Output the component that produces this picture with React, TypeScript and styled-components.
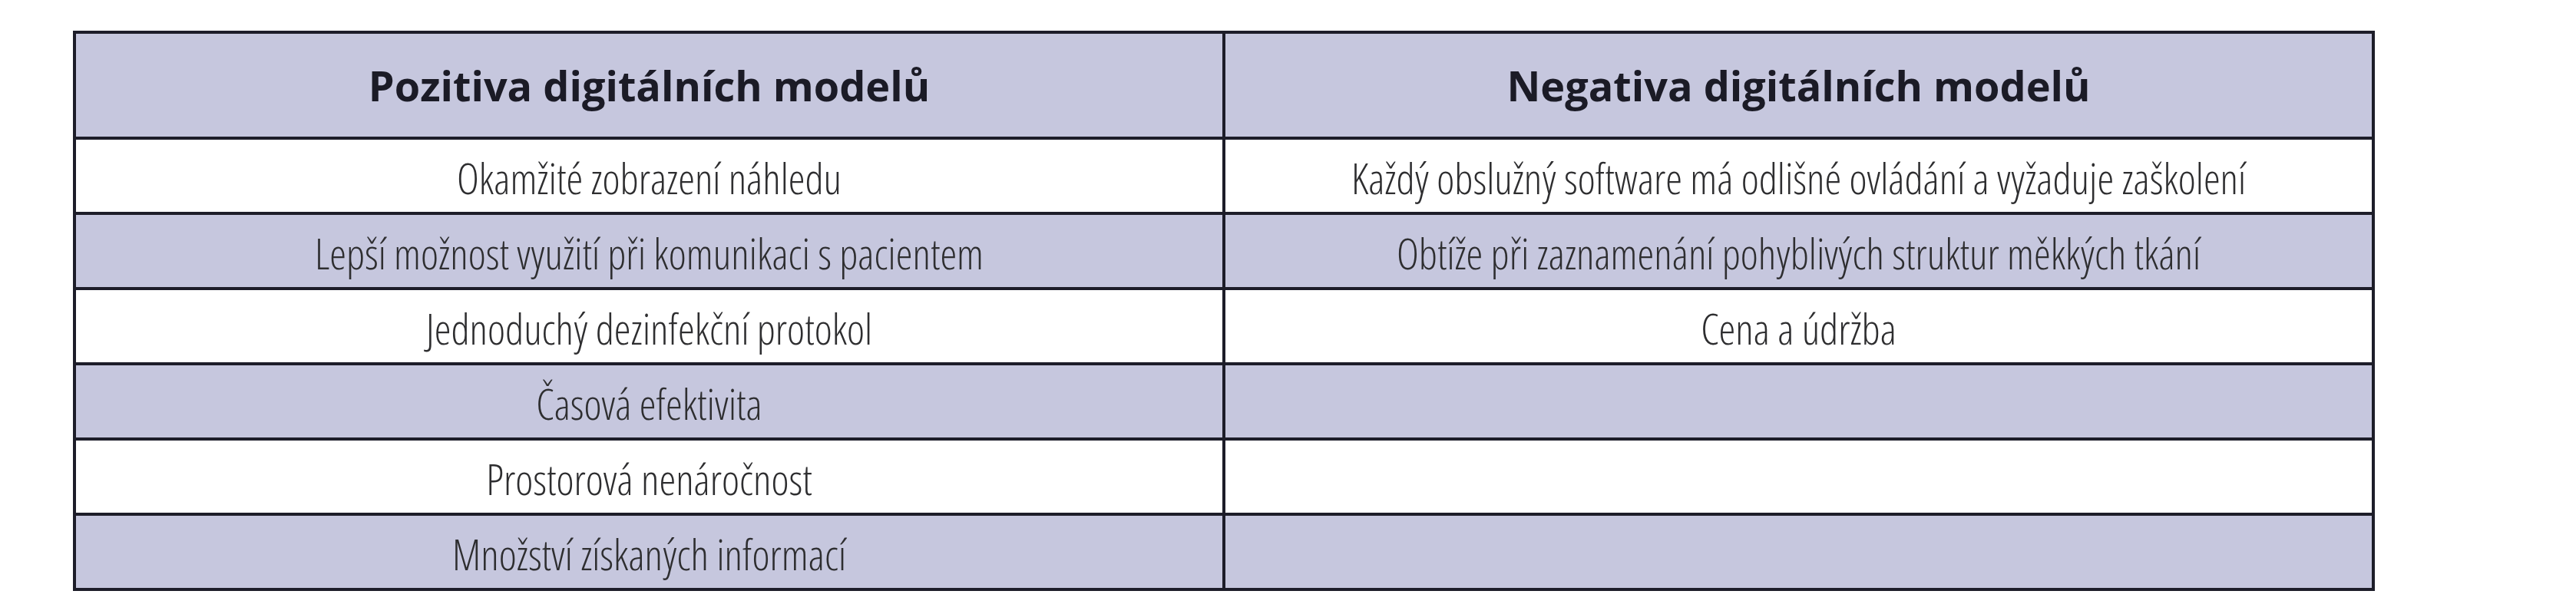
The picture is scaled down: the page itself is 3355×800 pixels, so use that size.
import React from 'react';
import styled, { createGlobalStyle } from 'styled-components';

const GlobalStyle = createGlobalStyle`
  html, body {
    margin: 0;
    padding: 0;
    background: #ffffff;
  }
`;

const Page = styled.div`
  padding: 40px 0 0 95px;
  width: 3355px;
  height: 800px;
  box-sizing: border-box;
`;

const Table = styled.table`
  width: 2998px;
  table-layout: fixed;
  border-spacing: 0;
  border-top: 4px solid #1d1d29;
  border-left: 4px solid #1d1d29;
`;

const Row = styled.tr<{ $shaded?: boolean }>`
  background-color: ${props => (props.$shaded ? '#c6c7de' : '#ffffff')};
`;

const HeadCell = styled.th`
  box-sizing: border-box;
  height: 138px;
  padding: 0;
  border-right: 4px solid #1d1d29;
  border-bottom: 4px solid #1d1d29;
  font-family: 'Open Sans', 'Liberation Sans', sans-serif;
  font-stretch: 92%;
  font-weight: 700;
  font-size: 54px;
  line-height: 1.2;
  color: #1b1b26;
  text-align: center;
  vertical-align: middle;
`;

const Cell = styled.td`
  box-sizing: border-box;
  height: 98px;
  padding: 6px 0 0;
  border-right: 4px solid #1d1d29;
  border-bottom: 4px solid #1d1d29;
  font-family: 'Open Sans', 'Liberation Sans Narrow', sans-serif;
  font-stretch: 75%;
  font-weight: 300;
  font-size: 55px;
  line-height: 1.2;
  color: #2e2e30;
  text-align: center;
  vertical-align: middle;
`;

const rows: [string, string][] = [
  ['Okamžité zobrazení náhledu', 'Každý obslužný software má odlišné ovládání a vyžaduje zaškolení'],
  ['Lepší možnost využití při komunikaci s pacientem', 'Obtíže při zaznamenání pohyblivých struktur měkkých tkání'],
  ['Jednoduchý dezinfekční protokol', 'Cena a údržba'],
  ['Časová efektivita', ''],
  ['Prostorová nenáročnost', ''],
  ['Množství získaných informací', ''],
];

const App = () => (
  <Page>
    <GlobalStyle />
    <Table>
      <thead>
        <Row $shaded>
          <HeadCell>Pozitiva digitálních modelů</HeadCell>
          <HeadCell>Negativa digitálních modelů</HeadCell>
        </Row>
      </thead>
      <tbody>
        {rows.map(([pos, neg], i) => (
          <Row key={pos} $shaded={i % 2 === 1}>
            <Cell>{pos}</Cell>
            <Cell>{neg}</Cell>
          </Row>
        ))}
      </tbody>
    </Table>
  </Page>
);

export default App;
